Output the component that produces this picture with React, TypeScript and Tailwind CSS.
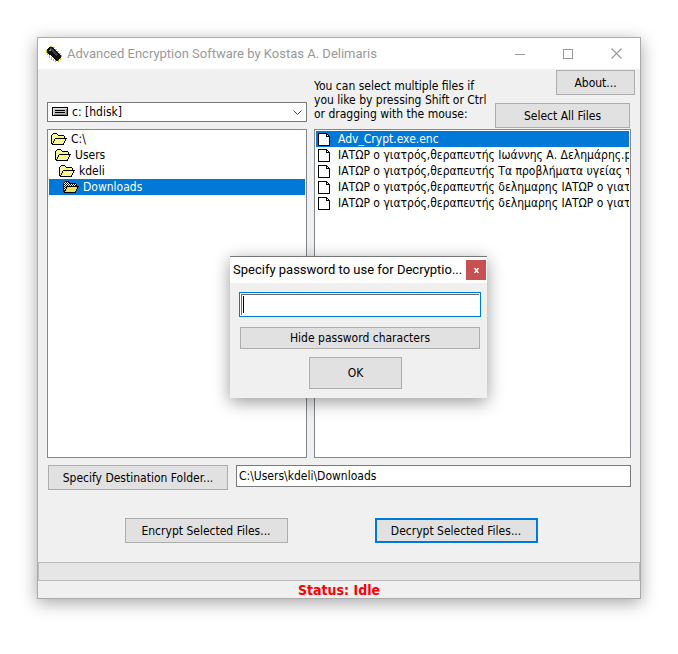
import React from "react";

const uiFont = "font-['DejaVu_Sans_Condensed','DejaVu_Sans',sans-serif]";
const captionFont = "font-['Roboto','Noto_Sans',sans-serif]";
const buttonBase =
  "border border-[#adadad] bg-[#e1e1e1] text-center text-black whitespace-nowrap";

function ChipIcon() {
  return (
    <svg
      width="16"
      height="16"
      viewBox="0 0 16 16"
      shapeRendering="crispEdges"
      aria-hidden="true"
    >
      <path
        d="M3 1h4v1h1v1h1v1h1v1h1v1h1v1h1v1h1v1h1v3h-1v1h-1v1h-1v1h-2v-1H9v-1H8v-1H7v-1H6v-1H5v-1H4V9H3V8H2V7H1V3h1V2h1z"
        fill="#101010"
      />
      <path
        d="M4 2h2v1h1v1h1v1h1v1h1v1h1v1h1v1h-1v1h-1V9H9V8H8V7H7V6H6V5H5V4H4z"
        fill="#3c3c3c"
      />
      <path d="M3 4h2v1H3zM4 3h1v1H4z" fill="#8c8c8c" />
      <path
        d="M0 4h1v3H0zM1 7h1v2H1zM3 9h1v3H3zM5 11h1v3H5zM7 13h1v2H7zM9 14h1v2H9zM4 0h2v1H4zM7 1h2v1H7zM9 3h2v1H9zM11 5h2v1h-2zM13 7h2v1h-2zM15 9h1v2h-1zM14 12h1v2h-1zM12 14h1v2h-1z"
        fill="#c8c000"
      />
    </svg>
  );
}

function FolderIcon({ selected = false }: { selected?: boolean }) {
  return (
    <svg
      width="16"
      height="12"
      viewBox="0 0 16 12"
      shapeRendering="crispEdges"
      className="shrink-0"
      aria-hidden="true"
    >
      <defs>
        <pattern id="folder-light" width="2" height="2" patternUnits="userSpaceOnUse">
          <rect width="2" height="2" fill="#ffff30" />
          <path d="M0 0h1v1H0zM1 1h1v1H1z" fill="#ffff98" />
        </pattern>
        <pattern id="folder-open" width="2" height="2" patternUnits="userSpaceOnUse">
          <rect width="2" height="2" fill="#fff" />
          <path d="M0 0h1v1H0zM1 1h1v1H1z" fill="#000" />
        </pattern>
      </defs>
      <path
        d="M1 2h1V1h4v1h7v3h2v1h-1v2h-1v2h-1v1H1z"
        fill={selected ? "url(#folder-open)" : "url(#folder-light)"}
      />
      {selected && <path d="M4 6h10v2h-1v2h-1v1H2v-1h1V8h1z" fill="#e9df55" />}
      <path
        d="M2 0h4v1H2zM1 1h1v1H1zM6 1h1v1H6zM7 2h6v1H7zM0 2h1v9H0zM13 3h1v2h-1zM4 5h12v1H4zM14 6h1v2h-1zM13 8h1v2h-1zM12 10h1v1h-1zM3 6h1v2H3zM2 8h1v2H2zM1 10h1v1H1zM1 11h12v1H1z"
        fill="#000"
      />
    </svg>
  );
}

function FileIcon() {
  return (
    <svg
      width="12"
      height="13"
      viewBox="0 0 12 13"
      shapeRendering="crispEdges"
      className="shrink-0"
      aria-hidden="true"
    >
      <path d="M0 0h9v1h1v1h1v1h1v10H0z" fill="#000" />
      <path d="M1 1h7v3h3v8H1zM9 2h1v1H9z" fill="#fff" />
    </svg>
  );
}

function DriveIcon() {
  return (
    <svg
      width="16"
      height="9"
      viewBox="0 0 16 9"
      shapeRendering="crispEdges"
      className="pointer-events-none absolute top-1 left-1"
      aria-hidden="true"
    >
      <path d="M0 0h16v9H0z" fill="#000" />
      <path d="M1 1h14v1H2v6H1z" fill="#e8e8e8" />
      <path d="M2 2h12v5H2z" fill="#c0c0c0" />
      <path d="M14 2h1v6H2V7h12z" fill="#808080" />
      <path d="M3 3h10v1H3zM3 5h10v1H3z" fill="#000" />
    </svg>
  );
}

const folders = [
  { name: "C:\\", indent: "pl-0.5" },
  { name: "Users", indent: "pl-1.5" },
  { name: "kdeli", indent: "pl-2.5" },
  { name: "Downloads", indent: "pl-3.5", selected: true },
];

const files = [
  { name: "Adv_Crypt.exe.enc", selected: true },
  { name: "ΙΑΤΩΡ ο γιατρός,θεραπευτής Ιωάννης Α. Δελημάρης.p" },
  { name: "ΙΑΤΩΡ ο γιατρός,θεραπευτής Τα προβλήματα υγείας τ" },
  { name: "ΙΑΤΩΡ ο γιατρός,θεραπευτής δελημαρης ΙΑΤΩΡ ο γιατ" },
  { name: "ΙΑΤΩΡ ο γιατρός,θεραπευτής δελημαρης ΙΑΤΩΡ ο γιατ" },
];

function TitleBar() {
  return (
    <header className="flex h-[31px] items-center bg-white pl-2 text-[#999]">
      <ChipIcon />
      <h1 className={`ml-[5px] flex-1 text-[13px] whitespace-nowrap ${captionFont}`}>
        Advanced Encryption Software by Kostas A. Delimaris
      </h1>
      <button aria-label="Minimize" className="flex h-full w-12 items-center justify-center">
        <svg width="10" height="10" viewBox="0 0 10 10" shapeRendering="crispEdges">
          <path d="M0 5h10v1H0z" fill="#999" />
        </svg>
      </button>
      <button aria-label="Maximize" className="flex h-full w-12 items-center justify-center">
        <svg width="10" height="10" viewBox="0 0 10 10" shapeRendering="crispEdges">
          <path d="M0 0h10v10H0zM1 1v8h8V1z" fill="#999" fillRule="evenodd" />
        </svg>
      </button>
      <button aria-label="Close" className="flex h-full w-12 items-center justify-center">
        <svg width="11" height="11" viewBox="0 0 11 11">
          <path d="M.5.5l10 10M10.500.5l-10 10" stroke="#999" strokeWidth="1.100" />
        </svg>
      </button>
    </header>
  );
}

function PasswordDialog() {
  return (
    <div
      role="dialog"
      aria-labelledby="dialog-title"
      className="absolute top-[218px] left-[192px] w-[257px] border-t border-[#777] bg-[#f0f0f0] pb-[9px] shadow-[0_4px_16px_rgba(0,0,0,0.4)]"
    >
      <div className="flex h-[26px] items-center bg-white pr-px pl-[3px]">
        <h2
          id="dialog-title"
          className={`min-w-0 flex-1 text-[13px] whitespace-nowrap text-black ${captionFont}`}
        >
          Specify password to use for Decryptio...
        </h2>
        <button
          aria-label="Close dialog"
          className="flex h-5 w-5 shrink-0 items-center justify-center bg-[#c75050]"
        >
          <svg width="5" height="5" viewBox="0 0 5 5">
            <path d="M.5 0l4 5M4.500 0l-4 5" stroke="#fff" strokeWidth="1.500" />
          </svg>
        </button>
      </div>
      <div className="flex flex-col items-center pt-[9px] pr-[6px] pl-[9px]">
        <div className="relative w-full border border-[#0078d7] bg-white p-px">
          <input
            aria-label="Password"
            type="text"
            className="block h-[21px] w-full border-t border-l border-[#696969] bg-white px-1 outline-none"
          />
          <span className="absolute top-[3px] left-[3px] h-[17px] w-px bg-black" />
        </div>
        <button className={`mt-[10px] h-[22px] w-60 ${buttonBase}`}>
          Hide password characters
        </button>
        <button className={`mt-2 mr-[9px] h-8 w-[93px] ${buttonBase}`}>OK</button>
      </div>
    </div>
  );
}

export default function App() {
  return (
    <div className={`min-h-screen bg-white p-[37px] text-[12px] text-black ${uiFont}`}>
      <main className="relative border border-[#aaa] bg-[#f0f0f0] shadow-[0_4px_16px_rgba(0,0,0,0.35)]">
        <TitleBar />

        <section className="flex gap-[7px] pr-[9px] pl-[9px]">
          <div className="flex w-[260px] shrink-0 flex-col">
            <div className="relative mt-[33px] h-5 border border-[#7a7a7a] bg-white">
              <DriveIcon />
              <select
                aria-label="Drive"
                className="block h-full w-full appearance-none bg-transparent pl-6 outline-none"
              >
                <option>c: [hdisk]</option>
              </select>
              <svg
                width="9"
                height="5"
                viewBox="0 0 9 5"
                className="pointer-events-none absolute top-[7px] right-1"
                aria-hidden="true"
              >
                <path d="M.5.5l4 4 4-4" stroke="#444" fill="none" />
              </svg>
            </div>
            <ul
              aria-label="Folders"
              className="mt-[7px] h-[329px] overflow-hidden border border-[#828790] bg-white p-px"
            >
              {folders.map((folder) => (
                <li key={folder.name}>
                  <button
                    className={`flex h-4 w-full items-center gap-1 text-left ${folder.indent} ${
                      folder.selected ? "bg-[#0078d7] text-white" : ""
                    }`}
                  >
                    <FolderIcon selected={folder.selected} />
                    {folder.name}
                  </button>
                </li>
              ))}
            </ul>
          </div>

          <div className="min-w-0 flex-1">
            <div className="flex h-[60px] justify-between">
              <p className="pt-[10px] leading-[14px] whitespace-nowrap">
                You can select multiple files if
                <br />
                you like by pressing Shift or Ctrl
                <br />
                or dragging with the mouse:
              </p>
              <div className="-mr-1 -ml-5 flex flex-col items-end gap-2 pt-px">
                <button className={`h-[25px] w-[79px] ${buttonBase}`}>About...</button>
                <button className={`mr-[5px] h-[25px] w-[135px] ${buttonBase}`}>
                  Select All Files
                </button>
              </div>
            </div>
            <ul
              aria-label="Files"
              className="h-[329px] overflow-hidden border border-[#828790] bg-white p-px"
            >
              {files.map((file, index) => (
                <li key={index}>
                  <button
                    className={`flex h-4 w-full items-center gap-2 overflow-hidden pl-0.5 text-left whitespace-nowrap ${
                      file.selected ? "bg-[#0078d7] text-white" : ""
                    }`}
                  >
                    <FileIcon />
                    {file.name}
                  </button>
                </li>
              ))}
            </ul>
          </div>
        </section>

        <section className="mt-[7px] flex items-start gap-2 pr-[9px] pl-[10px]">
          <button className={`h-[25px] w-[180px] shrink-0 ${buttonBase}`}>
            Specify Destination Folder...
          </button>
          <input
            aria-label="Destination folder"
            type="text"
            readOnly
            value="C:\Users\kdeli\Downloads"
            className="h-[22px] min-w-0 flex-1 border border-[#7a7a7a] bg-white px-0.5 outline-none"
          />
        </section>

        <section className="mt-7 flex justify-center gap-[87px] pr-4">
          <button className={`h-[25px] w-[163px] ${buttonBase}`}>
            Encrypt Selected Files...
          </button>
          <button className="h-[25px] w-[163px] border-2 border-[#0078d7] bg-[#e1e1e1] text-center whitespace-nowrap">
            Decrypt Selected Files...
          </button>
        </section>

        <footer className="mt-[19px]">
          <div
            role="progressbar"
            aria-label="Progress"
            aria-valuenow={0}
            className="h-[19px] border border-[#bcbcbc] bg-[#e6e6e6]"
          />
          <p className="h-[17px] text-center text-[14px] leading-[18px] font-bold text-[#ff0000]">
            Status: Idle
          </p>
        </footer>

        <PasswordDialog />
      </main>
    </div>
  );
}
